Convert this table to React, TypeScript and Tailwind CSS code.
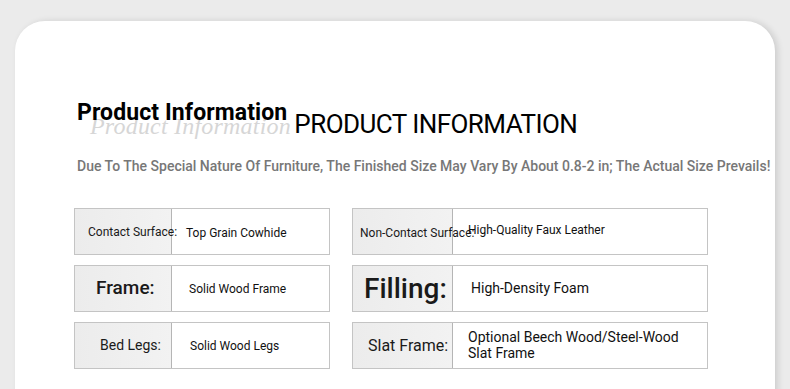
const rows = [
  {
    left: { label: 'Contact Surface:', labelClass: 'pl-[13px] text-[12px]', value: 'Top Grain Cowhide', valueClass: 'pl-[14px] text-[12px] pt-[2px]' },
    right: { label: 'Non-Contact Surface:', labelClass: 'pl-[7px] text-[12px] pt-[2px]', value: 'High-Quality Faux Leather', valueClass: 'pl-[15px] text-[12px] pb-[4px]' },
  },
  {
    left: { label: 'Frame:', labelClass: 'pl-[21px] text-[19px] font-medium', value: 'Solid Wood Frame', valueClass: 'pl-[17px] text-[12px]' },
    right: { label: 'Filling:', labelClass: 'pl-[11px] text-[28px] font-medium', value: 'High-Density Foam', valueClass: 'pl-[18px] text-[14px]' },
  },
  {
    left: { label: 'Bed Legs:', labelClass: 'pl-[25px] text-[14px]', value: 'Solid Wood Legs', valueClass: 'pl-[18px] text-[12px]' },
    right: { label: 'Slat Frame:', labelClass: 'pl-[15px] text-[16px]', value: 'Optional Beech Wood/Steel-Wood Slat Frame', valueClass: 'pl-[15px] pr-[16px] text-[14px] leading-[16px] pb-[2px]' },
  },
]

interface CellProps {
  label: string
  labelClass: string
  value: string
  valueClass: string
  labelWidth: string
  width: string
}

function SpecBox({ label, labelClass, value, valueClass, labelWidth, width }: CellProps) {
  return (
    <div className={`flex h-[47px] border border-[#c4c4c4] bg-white ${width}`}>
      <div className={`relative z-10 flex items-center shrink-0 whitespace-nowrap bg-gradient-to-r from-[#ececec] to-[#f2f2f2] border-r border-[#b5b5b5] text-[#1a1a1a] ${labelWidth} ${labelClass}`}>
        {label}
      </div>
      <div className={`flex items-center text-[#111] ${valueClass}`}>
        {value}
      </div>
    </div>
  )
}

export default function App() {
  return (
    <div className="h-[389px] overflow-hidden bg-[#ebebeb] pt-[21px] px-[15px] font-['Roboto',sans-serif]">
      <div className="h-[420px] rounded-[30px] bg-white shadow-[3px_0_6px_rgba(0,0,0,0.12)] pt-[80px] pl-[59px]">
        {/* heading */}
        <div className="flex items-end gap-[7px] pl-[3px]">
          <div className="relative">
            <span className="absolute left-[13px] top-[13px] whitespace-nowrap font-['Liberation_Serif',serif] italic text-[24px] leading-none text-[#d6d6d6] tracking-[0.2px]">
              Product Information
            </span>
            <h2 className="relative mb-[13px] text-[23px] leading-none font-bold tracking-[0.1px] text-black whitespace-nowrap">
              Product Information
            </h2>
          </div>
          <span className="text-[26px] leading-none text-black tracking-[-0.55px] whitespace-nowrap">PRODUCT INFORMATION</span>
        </div>
        <p className="mt-[19px] ml-[3px] text-[14px] font-medium text-[#777] whitespace-nowrap">
          Due To The Special Nature Of Furniture, The Finished Size May Vary By About 0.8-2 in; The Actual Size Prevails!
        </p>

        {/* spec tables */}
        <div className="mt-[31px] flex gap-[22px]">
          <div className="flex flex-col gap-[10px]">
            {rows.map(r => (
              <SpecBox key={r.left.label} {...r.left} labelWidth="w-[97px]" width="w-[256px]" />
            ))}
          </div>
          <div className="flex flex-col gap-[10px]">
            {rows.map(r => (
              <SpecBox key={r.right.label} {...r.right} labelWidth="w-[100px]" width="w-[356px]" />
            ))}
          </div>
        </div>
      </div>
    </div>
  )
}
